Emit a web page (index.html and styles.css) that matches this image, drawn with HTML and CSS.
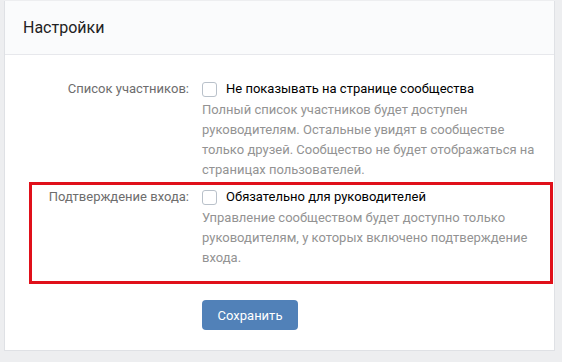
FILE: index.html
```html
<!DOCTYPE html>
<html lang="ru">
<head>
  <meta charset="UTF-8" />
  <meta name="viewport" content="width=device-width, initial-scale=1.0" />
  <title>Настройки</title>
  <link rel="stylesheet" href="styles.css">
</head>
<body>
  <div class="card">
    <div class="card-header">Настройки</div>

    <div class="card-body">
      <div class="row">
        <div class="label">Список участников:</div>
        <div class="field">
          <label class="check">
            <span class="box"></span>
            <span>Не показывать на странице сообщества</span>
          </label>
          <p class="hint">Полный список участников будет доступен руководителям. Остальные увидят в сообществе только друзей. Сообщество не будет отображаться на страницах пользователей.</p>
        </div>
      </div>

      <div class="row marked">
        <div class="label">Подтверждение входа:</div>
        <div class="field">
          <label class="check">
            <span class="box"></span>
            <span>Обязательно для руководителей</span>
          </label>
          <p class="hint">Управление сообществом будет доступно только руководителям, у которых включено подтверждение входа.</p>
        </div>
      </div>

      <div class="actions">
        <button class="btn">Сохранить</button>
      </div>
    </div>
  </div>
</body>
</html>
```

FILE: styles.css
```css
body {
  margin: 0;
  background-color: #edeef0;
  font-family: Roboto, 'Open Sans', sans-serif;
  font-size: 13px;
  color: #000;
}
.card {
  width: 549px;
  margin-left: 4px;
  background: #fff;
  border: 1px solid #dfe1e5;
  border-top: none;
  box-shadow: 0 1px 0 #d7d8db;
}
.card-header {
  height: 53px;
  line-height: 54px;
  padding-left: 18px;
  margin-top: 1px;
  background: #fafbfc;
  border-bottom: 1px solid #e7e8ec;
  font-size: 16px;
  color: #222;
}
.card-body {
  padding: 24px 0 20px;
}
.row {
  display: flex;
  line-height: 20px;
}
.label {
  width: 184px;
  text-align: right;
  color: #6d6d6d;
  flex-shrink: 0;
}
.field {
  padding-left: 13px;
  width: 338px;
}
.check {
  display: flex;
  align-items: center;
  gap: 9px;
}
.box {
  width: 13px;
  height: 13px;
  border: 1px solid #b9c1ca;
  border-radius: 3px;
  background: #fff;
}
.hint {
  margin: 1px 0 0;
  color: #939393;
}
.marked {
  margin: 2px 1px 0 24px;
  padding: 2px 0 13px;
  border: 3px solid #e0101a;
}
.marked .label {
  width: 157px;
}
.actions {
  padding: 16px 0 0 197px;
}
.btn {
  width: 96px;
  height: 30px;
  border: none;
  border-radius: 4px;
  background-color: #5181b8;
  color: #fff;
  font-family: Roboto, sans-serif;
  font-size: 13px;
  cursor: pointer;
}
```
